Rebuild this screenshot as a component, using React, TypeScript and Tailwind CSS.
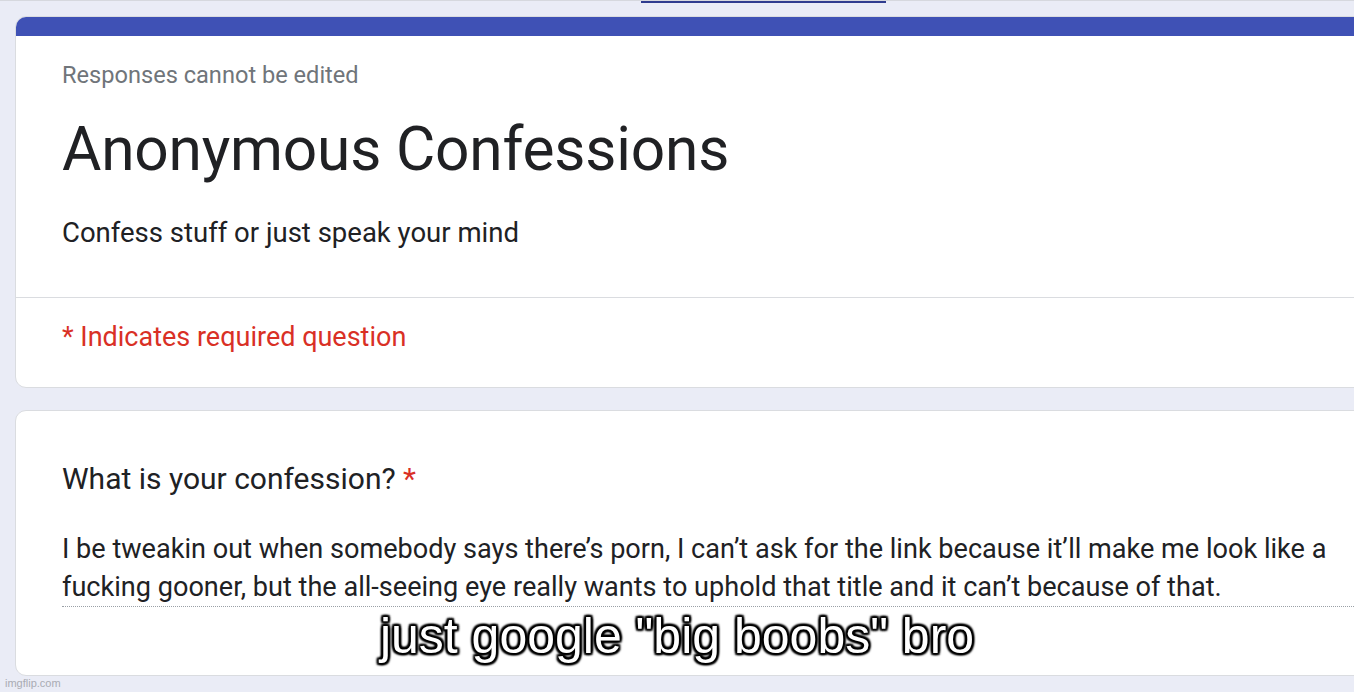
import React from 'react';

const font = { fontFamily: 'Roboto, "Noto Sans", Arial, sans-serif' };

export default function App() {
  return (
    <div
      className="relative w-[1354px] h-[692px] overflow-hidden bg-[#eaecf6] border-t border-[#d6d8de]"
      style={font}
    >
      {/* active tab marker at the very top */}
      <div className="absolute top-0 left-[641px] w-[245px] h-[2px] bg-[#2f3c8f]" />

      <div className="flex flex-col gap-[22px] pl-[15px] pt-[15px]">
        {/* Header card */}
        <div className="w-[1420px] rounded-[11px] bg-white border border-[#dadce0] overflow-hidden">
          <div className="h-[19px] bg-[#3f51b5]" />
          <div className="px-[46px] pt-[25px] pb-[47px] border-b border-[#dadce0]">
            <div className="text-[23.6px] leading-[28px] text-[#70757a]">Responses cannot be edited</div>
            <h1 className="mt-[26px] text-[60.4px] leading-[70px] text-[#202124] tracking-[-0.2px]">
              Anonymous Confessions
            </h1>
            <p className="mt-[31px] text-[27.5px] leading-[34px] text-[#202124]">
              Confess stuff or just speak your mind
            </p>
          </div>
          <div className="px-[46px] pt-[22px] pb-[33px]">
            <div className="text-[27px] leading-[34px] text-[#d93025]">* Indicates required question</div>
          </div>
        </div>

        {/* Question card */}
        <div className="w-[1420px] rounded-[11px] bg-white border border-[#dadce0] pl-[46px] pt-[49px] pb-[68px]">
          <div className="text-[30px] leading-[38px] text-[#202124]">
            What is your confession? <span className="text-[#d93025]">*</span>
          </div>
          <div className="mt-[32px] border-b border-dotted border-[#9aa0a6] text-[27.1px] leading-[38px] text-[#202124]">
            I be tweakin out when somebody says there’s porn, I can’t ask for the link because it’ll make me look like a
            <br />
            fucking gooner, but the all-seeing eye really wants to uphold that title and it can’t because of that.
          </div>
        </div>
      </div>

      {/* meme caption */}
      <div
        className="absolute left-0 right-0 top-[610px] text-center text-[50px] leading-[50px] font-normal text-white"
        style={{
          fontFamily: '"Liberation Sans", Arial, sans-serif',
          textShadow:
            '2px 2px 2px #000, -2px -2px 2px #000, 2px -2px 2px #000, -2px 2px 2px #000, 0 2px 2px #000, 0 -2px 2px #000, 2px 0 2px #000, -2px 0 2px #000',
        }}
      >
        just google "big boobs" bro
      </div>

      {/* watermark */}
      <div
        className="absolute left-[5px] bottom-[2px] text-[11px] leading-[14px] text-[#a9abb3]"
        style={{ fontFamily: '"Liberation Sans", Arial, sans-serif' }}
      >
        imgflip.com
      </div>
    </div>
  );
}
